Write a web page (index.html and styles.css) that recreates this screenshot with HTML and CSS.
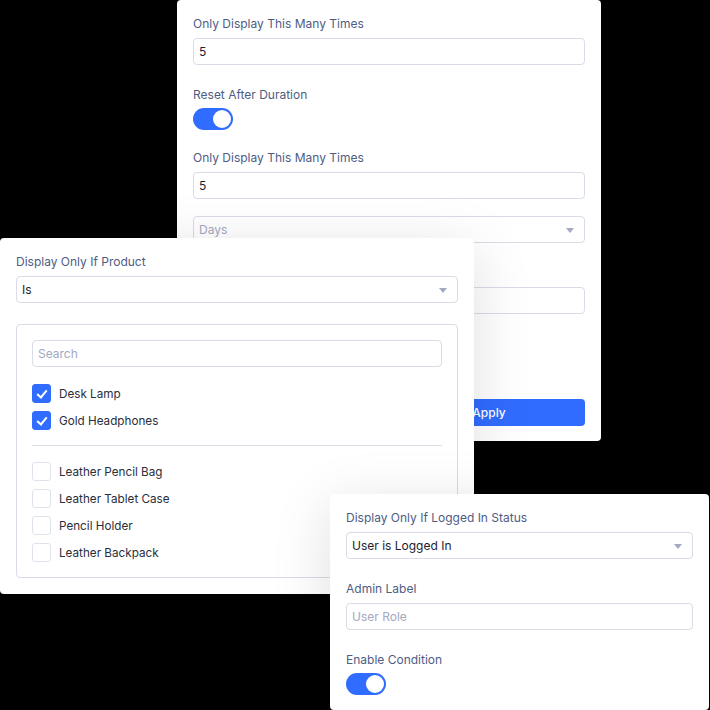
FILE: index.html
```html
<!DOCTYPE html>
<html lang="en">

<head>
    <meta charset="UTF-8">
    <meta name="viewport" content="width=device-width, initial-scale=1.0">
    <title>Display Conditions</title>
    <link rel="stylesheet" href="styles.css">
</head>

<body>
    <div class="stage">

        <!-- frequency settings -->
        <div class="panel panel-frequency">
            <div class="field">
                <label class="input-label">Only Display This Many Times</label>
                <div class="input-field">5</div>
            </div>
            <div class="field field-toggle">
                <label class="input-label">Reset After Duration</label>
                <span class="toggle"><span class="knob"></span></span>
            </div>
            <div class="field">
                <label class="input-label">Only Display This Many Times</label>
                <div class="input-field">5</div>
                <div class="select-field placeholder">Days<span class="caret"></span></div>
            </div>
            <div class="field">
                <label class="input-label">Duration Amount</label>
                <div class="input-field">1</div>
            </div>
            <div class="field field-toggle">
                <label class="input-label">Enable Condition</label>
                <span class="toggle"><span class="knob"></span></span>
            </div>
            <div class="btn-row">
                <button class="btn btn-light">Cancel</button>
                <button class="btn btn-primary">Apply</button>
            </div>
        </div>

        <!-- product condition -->
        <div class="panel panel-product">
            <div class="field">
                <label class="input-label">Display Only If Product</label>
                <div class="select-field">Is<span class="caret"></span></div>
            </div>
            <div class="product-box">
                <div class="input-field placeholder">Search</div>
                <ul class="check-list">
                    <li><span class="check checked"></span>Desk Lamp</li>
                    <li><span class="check checked"></span>Gold Headphones</li>
                </ul>
                <hr class="divider">
                <ul class="check-list">
                    <li><span class="check"></span>Leather Pencil Bag</li>
                    <li><span class="check"></span>Leather Tablet Case</li>
                    <li><span class="check"></span>Pencil Holder</li>
                    <li><span class="check"></span>Leather Backpack</li>
                </ul>
            </div>
        </div>

        <!-- logged in condition -->
        <div class="panel panel-login">
            <div class="field">
                <label class="input-label">Display Only If Logged In Status</label>
                <div class="select-field">User is Logged In<span class="caret"></span></div>
            </div>
            <div class="field">
                <label class="input-label">Admin Label</label>
                <div class="input-field placeholder">User Role</div>
            </div>
            <div class="field field-toggle last">
                <label class="input-label">Enable Condition</label>
                <span class="toggle"><span class="knob"></span></span>
            </div>
        </div>

    </div>
</body>

</html>
```

FILE: styles.css
```css
/*css*/
body {
    font-family: Inter, "Noto Sans", sans-serif;
    background: #000000;
    margin: 0;
    overflow: hidden;
}

.stage {
    position: relative;
    width: 710px;
    height: 710px;
}

.panel {
    position: absolute;
    background-color: #ffffff;
    padding: 16px;
    border-radius: 4px;
    box-sizing: border-box;
    box-shadow: 0 12px 60px rgba(0, 0, 0, 0.13);
}

.panel-frequency {
    left: 177px;
    top: 0;
    width: 424px;
    height: 441px;
}

.panel-product {
    left: 0;
    top: 238px;
    width: 474px;
    height: 356px;
}

.panel-login {
    left: 330px;
    top: 494px;
    width: 379px;
    height: 216px;
}

.field {
    display: flex;
    flex-direction: column;
    margin-bottom: 22px;
}

.field-toggle {
    margin-bottom: 20px;
}

.input-label {
    font-size: 12px;
    line-height: 16px;
    color: #4e5c84;
    margin-bottom: 6px;
}

.field-toggle .input-label {
    margin-bottom: 5px;
}

.input-field,
.select-field {
    position: relative;
    height: 27px;
    line-height: 26px;
    padding: 0 5px;
    border: 1px solid #d9dce6;
    border-radius: 4px;
    box-sizing: border-box;
    font-size: 12px;
    color: #1d2130;
}

.select-field + .select-field,
.input-field + .select-field {
    margin-top: 17px;
}

.placeholder {
    color: #a2a9c0;
}

.caret {
    position: absolute;
    right: 10px;
    top: 11px;
    width: 0;
    height: 0;
    border-left: 4px solid transparent;
    border-right: 4px solid transparent;
    border-top: 5px solid #a3aac2;
}

.toggle {
    position: relative;
    display: block;
    width: 40px;
    height: 22px;
    border-radius: 11px;
    background-color: #306cff;
}

.knob {
    position: absolute;
    right: 2px;
    top: 2px;
    width: 18px;
    height: 18px;
    border-radius: 50%;
    background-color: #ffffff;
}

.btn-row {
    display: flex;
    gap: 8px;
    margin-top: 0;
}

.btn {
    flex: 1;
    height: 27px;
    border: none;
    border-radius: 4px;
    font-family: Inter, sans-serif;
    font-size: 12px;
    font-weight: 500;
}

.btn-light {
    background-color: #eef0f5;
    color: #4e5c84;
}

.btn-primary {
    background-color: #306cff;
    color: #ffffff;
}

.product-box {
    border: 1px solid #d9dce6;
    border-radius: 4px;
    padding: 15px;
    margin-top: -1px;
}

.check-list {
    list-style: none;
    margin: 17px 0 0;
    padding: 0;
    display: flex;
    flex-direction: column;
    gap: 8px;
}

.check-list li {
    display: flex;
    align-items: center;
    height: 19px;
    font-size: 11.7px;
    color: #2a2e3b;
}

.check {
    position: relative;
    width: 19px;
    height: 19px;
    margin-right: 8px;
    border: 1px solid #dfe2ea;
    border-radius: 3px;
    box-sizing: border-box;
    background-color: #ffffff;
}

.check.checked {
    background-color: #306cff;
    border-color: #306cff;
}

.check.checked::after {
    content: "";
    position: absolute;
    left: 5.5px;
    top: 2.5px;
    width: 4px;
    height: 8px;
    border-right: 2px solid #ffffff;
    border-bottom: 2px solid #ffffff;
    transform: rotate(40deg);
}

.divider {
    border: none;
    border-top: 1px solid #dcdfe8;
    margin: 15px 0 0;
}

.divider + .check-list {
    margin-top: 16px;
}

.last {
    margin-bottom: 0;
}
```
